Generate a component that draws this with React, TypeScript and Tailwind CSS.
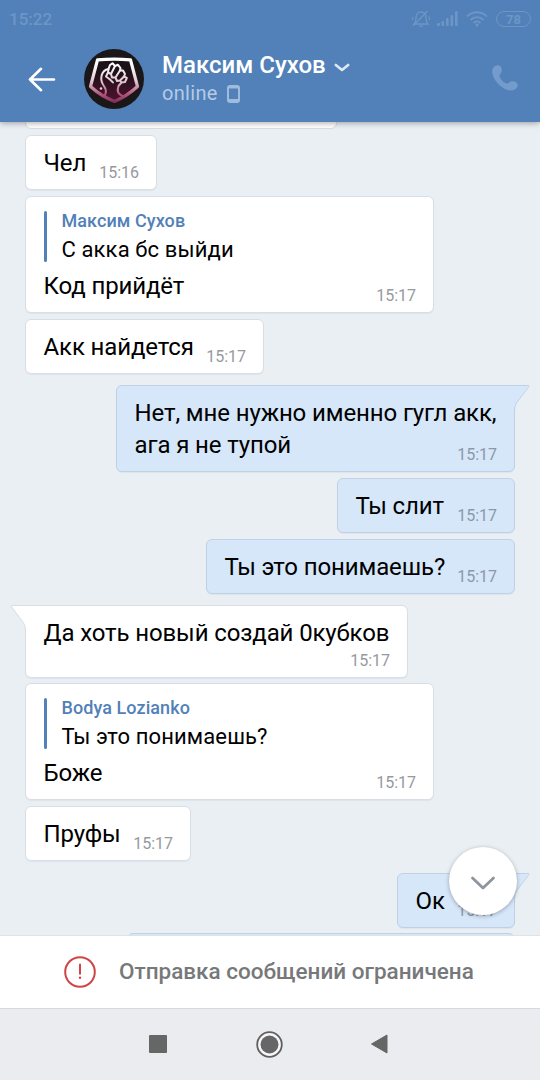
import React from 'react';
import clsx from 'clsx';

interface Message {
  id: number;
  lines: string[];
  time: string;
  own?: boolean;
  tail?: boolean;
  // time goes on its own line under the text
  timeBelow?: boolean;
  reply?: { author: string; text: string };
  size: string;
}

const messages: Message[] = [
  { id: 1, lines: ['Чел'], time: '15:16', size: 'w-[132px] mt-[6px]' },
  {
    id: 2,
    lines: ['Код прийдёт'],
    time: '15:17',
    reply: { author: 'Максим Сухов', text: 'С акка бс выйди' },
    size: 'w-[409px] mt-[6px]',
  },
  { id: 3, lines: ['Акк найдется'], time: '15:17', size: 'w-[239px] mt-[6px]' },
  {
    id: 4,
    lines: ['Нет, мне нужно именно гугл акк,', 'ага я не тупой'],
    time: '15:17',
    own: true,
    tail: true,
    size: 'w-[399px] mt-[11px]',
  },
  { id: 5, lines: ['Ты слит'], time: '15:17', own: true, size: 'w-[178px] mt-[6px]' },
  { id: 6, lines: ['Ты это понимаешь?'], time: '15:17', own: true, size: 'w-[309px] mt-[6px]' },
  {
    id: 7,
    lines: ['Да хоть новый создай 0кубков'],
    time: '15:17',
    tail: true,
    timeBelow: true,
    size: 'w-[383px] mt-[11px]',
  },
  {
    id: 8,
    lines: ['Боже'],
    time: '15:17',
    reply: { author: 'Bodya Lozianko', text: 'Ты это понимаешь?' },
    size: 'w-[409px] mt-[5px]',
  },
  { id: 9, lines: ['Пруфы'], time: '15:17', size: 'w-[166px] mt-[6px]' },
  { id: 10, lines: ['Ок'], time: '15:17', own: true, tail: true, size: 'w-[118px] mt-[12px]' },
];

const Tail: React.FC<{ own?: boolean }> = ({ own }) => (
  <svg
    className={clsx(
      'absolute -top-px w-[23px] h-[26px]',
      own ? '-right-[16px]' : '-left-[16px] -scale-x-100'
    )}
    viewBox="0 0 23 26"
    fill="none"
  >
    <path d="M0 .5H21.5L9.7 17.5Q7.5 20.5 7.5 26H0Z" fill={own ? '#d6e7f9' : '#fff'} />
    <path
      d="M0 .5H21.5Q22.5 .7 21.8 1.8L9.7 17.5Q7.5 20.5 7.5 26"
      stroke={own ? '#bfd1e7' : '#d9dee4'}
    />
  </svg>
);

const Bubble: React.FC<{ message: Message }> = ({ message }) => {
  const { lines, time, own, tail, timeBelow, reply, size } = message;

  return (
    <div
      className={clsx(
        'relative flex shrink-0 flex-col rounded-[6px] border pt-[11px] pr-[17px] pb-[6px] pl-[17.5px] shadow-[0_1px_1px_rgba(0,30,70,0.05)]',
        own ? 'self-end border-[#bfd1e7] bg-[#d6e7f9]' : 'self-start border-[#d9dee4] bg-white',
        size
      )}
    >
      {tail && <Tail own={own} />}
      {reply && (
        <div className="mt-[3px] mb-2 flex h-[51px] gap-[15px]">
          <div className="w-[3px] rounded-sm bg-[#5181b8]" />
          <div className="whitespace-nowrap">
            <div className="-mt-px text-[18px] leading-[21px] font-medium tracking-[0.08px] text-[#5181b8]">
              {reply.author}
            </div>
            <div className="mt-[4px] text-[22px] leading-[30px] tracking-[0.12px] text-black">
              {reply.text}
            </div>
          </div>
        </div>
      )}
      {lines.map((line) => (
        <p
          key={line}
          className="relative w-fit text-[24px] leading-8 tracking-[-0.12px] whitespace-nowrap text-black"
        >
          {line}
        </p>
      ))}
      <span
        className={clsx(
          'self-end text-[16px] leading-5',
          own ? 'text-[#8b98a8]' : 'text-[#96999d]',
          timeBelow ? 'mt-[2px]' : '-mt-4'
        )}
      >
        {time}
      </span>
    </div>
  );
};

const StatusBar = () => (
  <div className="flex h-[38px] items-center justify-between pr-[9px] pl-[9px] text-[#6d96c7]">
    <span className="text-[17px] leading-5 font-medium">15:22</span>
    <div className="flex items-center">
      <svg className="h-[18px] w-[20px]" viewBox="0 0 20 18" fill="none" stroke="currentColor" strokeWidth="1.3">
        <path d="M3 14C4.6 12.500 5 10.500 5 8C5 4.500 6.800 2 10 2C13.200 2 15 4.500 15 8C15 10.500 15.500 12.500 17 14Z" />
        <path d="M8 16.200H12M2 16L16.500 1M1.800 7L1.500 10M18 6.500L18.500 10" />
      </svg>
      <svg className="ml-[6px] h-[16px] w-[21px]" viewBox="0 0 21 16" fill="currentColor">
        <rect x="0" y="12" width="3" height="3" rx="1" />
        <rect x="4.500" y="10" width="2.600" height="5" rx="1" />
        <rect x="9" y="7" width="2.600" height="8" rx="1" />
        <rect x="13.500" y="4" width="2.600" height="11" rx="1" />
        <rect x="18" y="0" width="2.600" height="15" rx="1" />
      </svg>
      <svg className="ml-[8px] h-[16px] w-[22px]" viewBox="0 0 22 16" fill="none" stroke="currentColor" strokeWidth="1.800">
        <path d="M1 5.500C6.500 -.2 15.500 -.2 21 5.500M4.500 9C8.200 5.200 13.800 5.200 17.500 9M7.500 12C9.500 10 12.500 10 14.500 12" />
        <circle cx="11" cy="14" r="1.500" fill="currentColor" stroke="none" />
      </svg>
      <div className="ml-[8px] flex h-[16px] w-[35px] items-center justify-center rounded-full border border-current text-[13px] leading-none font-bold">
        78
      </div>
    </div>
  </div>
);

const Avatar = () => (
  <svg className="h-[60px] w-[60px] shrink-0" viewBox="0 0 60 60">
    <defs>
      <linearGradient id="badge" x1="0" y1="8" x2="0" y2="56" gradientUnits="userSpaceOnUse">
        <stop offset="0.15" stopColor="#ffffff" />
        <stop offset="0.5" stopColor="#e3c9d2" />
        <stop offset="0.78" stopColor="#b0557c" />
        <stop offset="1" stopColor="#6d1f45" />
      </linearGradient>
      <linearGradient id="inside" x1="0" y1="10" x2="0" y2="56" gradientUnits="userSpaceOnUse">
        <stop offset="0.3" stopColor="#1c1217" />
        <stop offset="1" stopColor="#571133" />
      </linearGradient>
    </defs>
    <circle cx="30" cy="30" r="30" fill="#1b1719" />
    <path
      d="M13.500 10.800Q30 9.500 46.500 10.800L53.500 37.500Q42.500 47.500 30.500 52.500Q17.500 47.500 6.500 37.500Z"
      fill="url(#inside)"
      stroke="url(#badge)"
      strokeWidth="3.200"
      strokeLinejoin="round"
    />
    <g fill="none" stroke="url(#badge)" strokeWidth="2" strokeLinejoin="round" strokeLinecap="round">
      <path d="M20 48C22.500 44 22.500 41 20.500 38C18 34.500 16.500 31.500 17.500 27C18.500 23 21 20.500 24.500 20L26 16L28.500 14.300L31 17L34 15.800L36.500 19L36 21.500L39 21.500L41 25L40 27.500L42.800 29L41 33L37.500 33.500L34.500 37C33 41 33.500 45 38.500 47" />
      <path d="M24.500 20L24 23.500L27 25L31 17M27 25L28 28.500L31.500 28.500L36 21.500M31.500 28.500L33 32L36 31.500L40 27.500M36 31.500L37.500 33.500M24 23.500L22 27.500L26 30.500L29 33.500" />
    </g>
    <circle cx="17" cy="39.500" r="1.300" fill="#f3c6df" />
  </svg>
);

const Header = () => (
  <header className="relative z-10 h-[122px] shrink-0 bg-[#5181b8] shadow-[0_1px_6px_rgba(0,0,0,0.35)]">
    <StatusBar />
    <div className="flex pr-[22px] pl-[28px]">
      <svg
        className="mt-[29px] h-[25px] w-[28px]"
        viewBox="0 0 28 25"
        fill="none"
        stroke="#fff"
        strokeWidth="2.600"
        strokeLinecap="round"
        strokeLinejoin="round"
      >
        <path d="M26 12.500H2M13 1.800L2 12.500L13 23.200" />
      </svg>
      <div className="mt-[11px] ml-[28px]">
        <Avatar />
      </div>
      <div className="mt-[13px] ml-[18px] whitespace-nowrap">
        <div className="flex items-center">
          <span className="text-[24px] leading-[28px] font-medium text-white">Максим Сухов</span>
          <svg
            className="mt-[4px] ml-[8px] h-[9px] w-[16px]"
            viewBox="0 0 16 9"
            fill="none"
            stroke="#dce8f5"
            strokeWidth="2.600"
            strokeLinecap="round"
            strokeLinejoin="round"
          >
            <path d="M1.800 2L8 7L14.200 2" />
          </svg>
        </div>
        <div className="mt-[2px] flex items-center">
          <span className="text-[20px] leading-6 tracking-[0.3px] text-[#b4cbe6]">online</span>
          <svg className="mt-[1px] ml-[9px] h-[18px] w-[13px]" viewBox="0 0 13 18" fill="#a0bcdd">
            <path
              fillRule="evenodd"
              d="M3 0H10Q13 0 13 3V15Q13 18 10 18H3Q0 18 0 15V3Q0 0 3 0ZM2 3.500V14H11V3.500Z"
            />
          </svg>
        </div>
      </div>
      <svg className="mt-[27px] ml-auto h-[26px] w-[26px]" viewBox="0 0 26 26" fill="#739bcb">
        <path d="M4.500 .5C8 -.5 10 2 9.800 6C9.600 8.500 7.300 9 7.500 11.300C8 14 12 18 14.700 18.500C17 18.700 17.500 16.300 20 16.200C24 16.200 26.800 18.500 25.500 21.500C23.500 26 17.500 26.700 12 23.500C6 20 1 13.500 .3 8C-.2 4 1.200 1.500 4.500 .5Z" />
      </svg>
    </div>
  </header>
);

const Footer = () => (
  <footer className="relative z-10 flex h-[73px] shrink-0 items-center border-t border-[#dfe3e8] bg-white pl-[64px]">
    <svg className="h-8 w-8" viewBox="0 0 32 32" fill="none" stroke="#cf4545" strokeWidth="2">
      <circle cx="16" cy="16" r="14.800" />
      <path d="M16 8.500V17.800" strokeLinecap="round" />
      <circle cx="16" cy="21.800" r="1.200" fill="#cf4545" stroke="none" />
    </svg>
    <span className="mb-[2px] ml-[23px] text-[22.5px] leading-7 font-medium whitespace-nowrap text-[#76787a]">
      Отправка сообщений ограничена
    </span>
  </footer>
);

const NavigationBar = () => (
  <nav className="flex h-[72px] shrink-0 items-center border-t border-[#d5d8de] bg-[#ebecf0] pb-[1px] pl-[149px]">
    <div className="h-[18px] w-[18px] rounded-[1px] bg-[#666]" />
    <svg className="ml-[89px] h-[27px] w-[27px]" viewBox="0 0 27 27">
      <circle cx="13.500" cy="13.500" r="12.300" fill="#f7f7f9" stroke="#5f5f5f" strokeWidth="1.800" />
      <circle cx="13.500" cy="13.500" r="9" fill="#666" />
    </svg>
    <svg className="ml-[87px] h-[20px] w-[18px]" viewBox="0 0 18 20">
      <path d="M17 1V19L1.500 10Z" fill="#666" stroke="#666" strokeLinejoin="round" />
    </svg>
  </nav>
);

export default function App() {
  return (
    <div className="flex h-[1080px] w-[540px] flex-col overflow-hidden bg-[#eaeff4] font-['Roboto',sans-serif]">
      <Header />
      <main className="relative flex min-h-0 flex-1 flex-col overflow-hidden pr-[25px] pl-[25px]">
        <div className="-mt-4 h-[23px] w-[312px] shrink-0 rounded-[6px] border border-[#d9dee4] bg-white" />
        {messages.map((message) => (
          <Bubble key={message.id} message={message} />
        ))}
        <div className="mt-[5px] h-[55px] w-[388px] shrink-0 self-end rounded-[6px] border border-[#bfd1e7] bg-[#d6e7f9]" />
        <button className="absolute right-[23px] bottom-[20px] flex h-[68px] w-[68px] items-center justify-center rounded-full bg-white pt-[4px] shadow-[0_1px_4px_rgba(0,0,0,0.3)]">
          <svg
            className="h-[14px] w-[26px]"
            viewBox="0 0 26 14"
            fill="none"
            stroke="#8f959e"
            strokeWidth="2.800"
            strokeLinecap="round"
            strokeLinejoin="round"
          >
            <path d="M2.500 2L13 12L23.500 2" />
          </svg>
        </button>
      </main>
      <Footer />
      <NavigationBar />
    </div>
  );
}
